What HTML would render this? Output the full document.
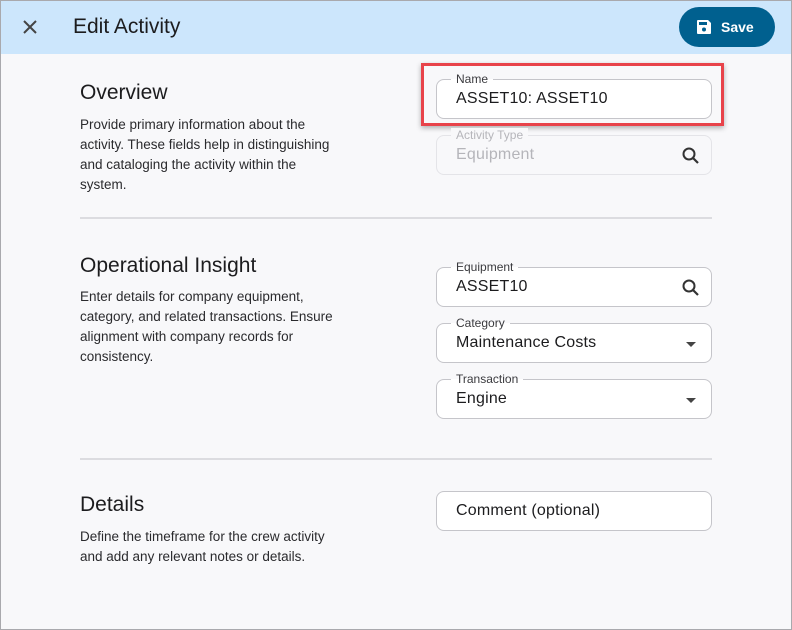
<!DOCTYPE html>
<html><head><meta charset="utf-8"><style>
*{box-sizing:border-box;margin:0;padding:0}
body{width:792px;height:630px;overflow:hidden;background:#f8f8fa;font-family:"Liberation Sans",sans-serif;color:#1c1c1e;position:relative}
.frame{position:absolute;inset:0;border:1px solid #a9a9ad;pointer-events:none;z-index:5}
.hdr{position:absolute;left:0;top:0;width:792px;height:54px;background:#cce6fc}
.x{position:absolute;left:20px;top:17px}
.title{position:absolute;left:73px;top:15px;font-size:21px;color:#1c1c1e}
.save{position:absolute;left:679px;top:7px;width:96px;height:40px;border-radius:20px;background:#00608f;color:#fff;font-weight:bold;font-size:14px}
.save span{position:absolute;left:42px;top:12px}
.save svg{position:absolute;left:17px;top:12px}
h2{position:absolute;left:80px;font-weight:normal;font-size:21px;color:#1c1c1e}
p{position:absolute;left:80px;width:320px;font-size:13.5px;line-height:20px;color:#2a2a2d;white-space:nowrap}
.hr{position:absolute;left:80px;width:632px;height:2px;background:#dcdce0}
.f{position:absolute;left:436px;width:276px;height:40px;border:1px solid #c5c5ca;border-radius:8px;background:#fff}
.f .l{position:absolute;left:14px;top:-8px;font-size:12px;background:linear-gradient(#f8f8fa 50%,#fff 50%);padding:0 5px;color:#3a3a3e;line-height:14px}
.f .v{position:absolute;left:19px;top:10px;font-size:16px;color:#1c1c1e;letter-spacing:.2px}
.f svg{position:absolute;right:10px;top:10px}
.dis{border-color:#e4e4e8}
.dis .l,.dis .v{color:#b5b5ba}
.red{position:absolute;left:421px;top:63px;width:303px;height:63px;border:3px solid #e8434a;box-shadow:0 2px 5px rgba(0,0,0,.3)}
.arr{position:absolute;right:15px;top:18px;width:0;height:0;border-left:5px solid transparent;border-right:5px solid transparent;border-top:5px solid #444}
</style></head><body>
<div class="hdr">
<svg class="x" width="20" height="20" viewBox="0 0 20 20"><path d="M4 4L16 16M16 4L4 16" stroke="#444" stroke-width="2"/></svg>
<div class="title">Edit Activity</div>
<div class="save"><svg width="16" height="16" viewBox="0 0 16 16"><path d="M1 2a1 1 0 0 1 1-1h10l3 3v10a1 1 0 0 1-1 1H2a1 1 0 0 1-1-1z" fill="#fff"/><rect x="3" y="3" width="8" height="3" fill="#00608f"/><circle cx="8" cy="10.5" r="2" fill="#00608f"/></svg><span>Save</span></div>
</div>
<h2 style="top:81px">Overview</h2>
<p style="top:115px">Provide primary information about the<br>activity. These fields help in distinguishing<br>and cataloging the activity within the<br>system.</p>
<div class="f" style="top:79px"><div class="l">Name</div><div class="v">ASSET10: ASSET10</div></div>
<div class="red"></div>
<div class="f dis" style="top:135px;background:transparent"><div class="l" style="background:#f8f8fa">Activity Type</div><div class="v">Equipment</div><svg width="20" height="20" viewBox="0 0 20 20"><circle cx="8" cy="8" r="5.5" stroke="#333" stroke-width="2" fill="none"/><path d="M12 12L17 17" stroke="#333" stroke-width="2.2"/></svg></div>
<div class="hr" style="top:217px"></div>
<h2 style="top:254px">Operational Insight</h2>
<p style="top:287px">Enter details for company equipment,<br>category, and related transactions. Ensure<br>alignment with company records for<br>consistency.</p>
<div class="f" style="top:267px"><div class="l">Equipment</div><div class="v">ASSET10</div><svg width="20" height="20" viewBox="0 0 20 20"><circle cx="8" cy="8" r="5.5" stroke="#333" stroke-width="2" fill="none"/><path d="M12 12L17 17" stroke="#333" stroke-width="2.2"/></svg></div>
<div class="f" style="top:323px"><div class="l">Category</div><div class="v">Maintenance Costs</div><div class="arr"></div></div>
<div class="f" style="top:379px"><div class="l">Transaction</div><div class="v">Engine</div><div class="arr"></div></div>
<div class="hr" style="top:458px"></div>
<h2 style="top:493px">Details</h2>
<p style="top:527px">Define the timeframe for the crew activity<br>and add any relevant notes or details.</p>
<div class="f" style="top:491px"><div class="v">Comment (optional)</div></div>
<div class="frame"></div>
</body></html>
